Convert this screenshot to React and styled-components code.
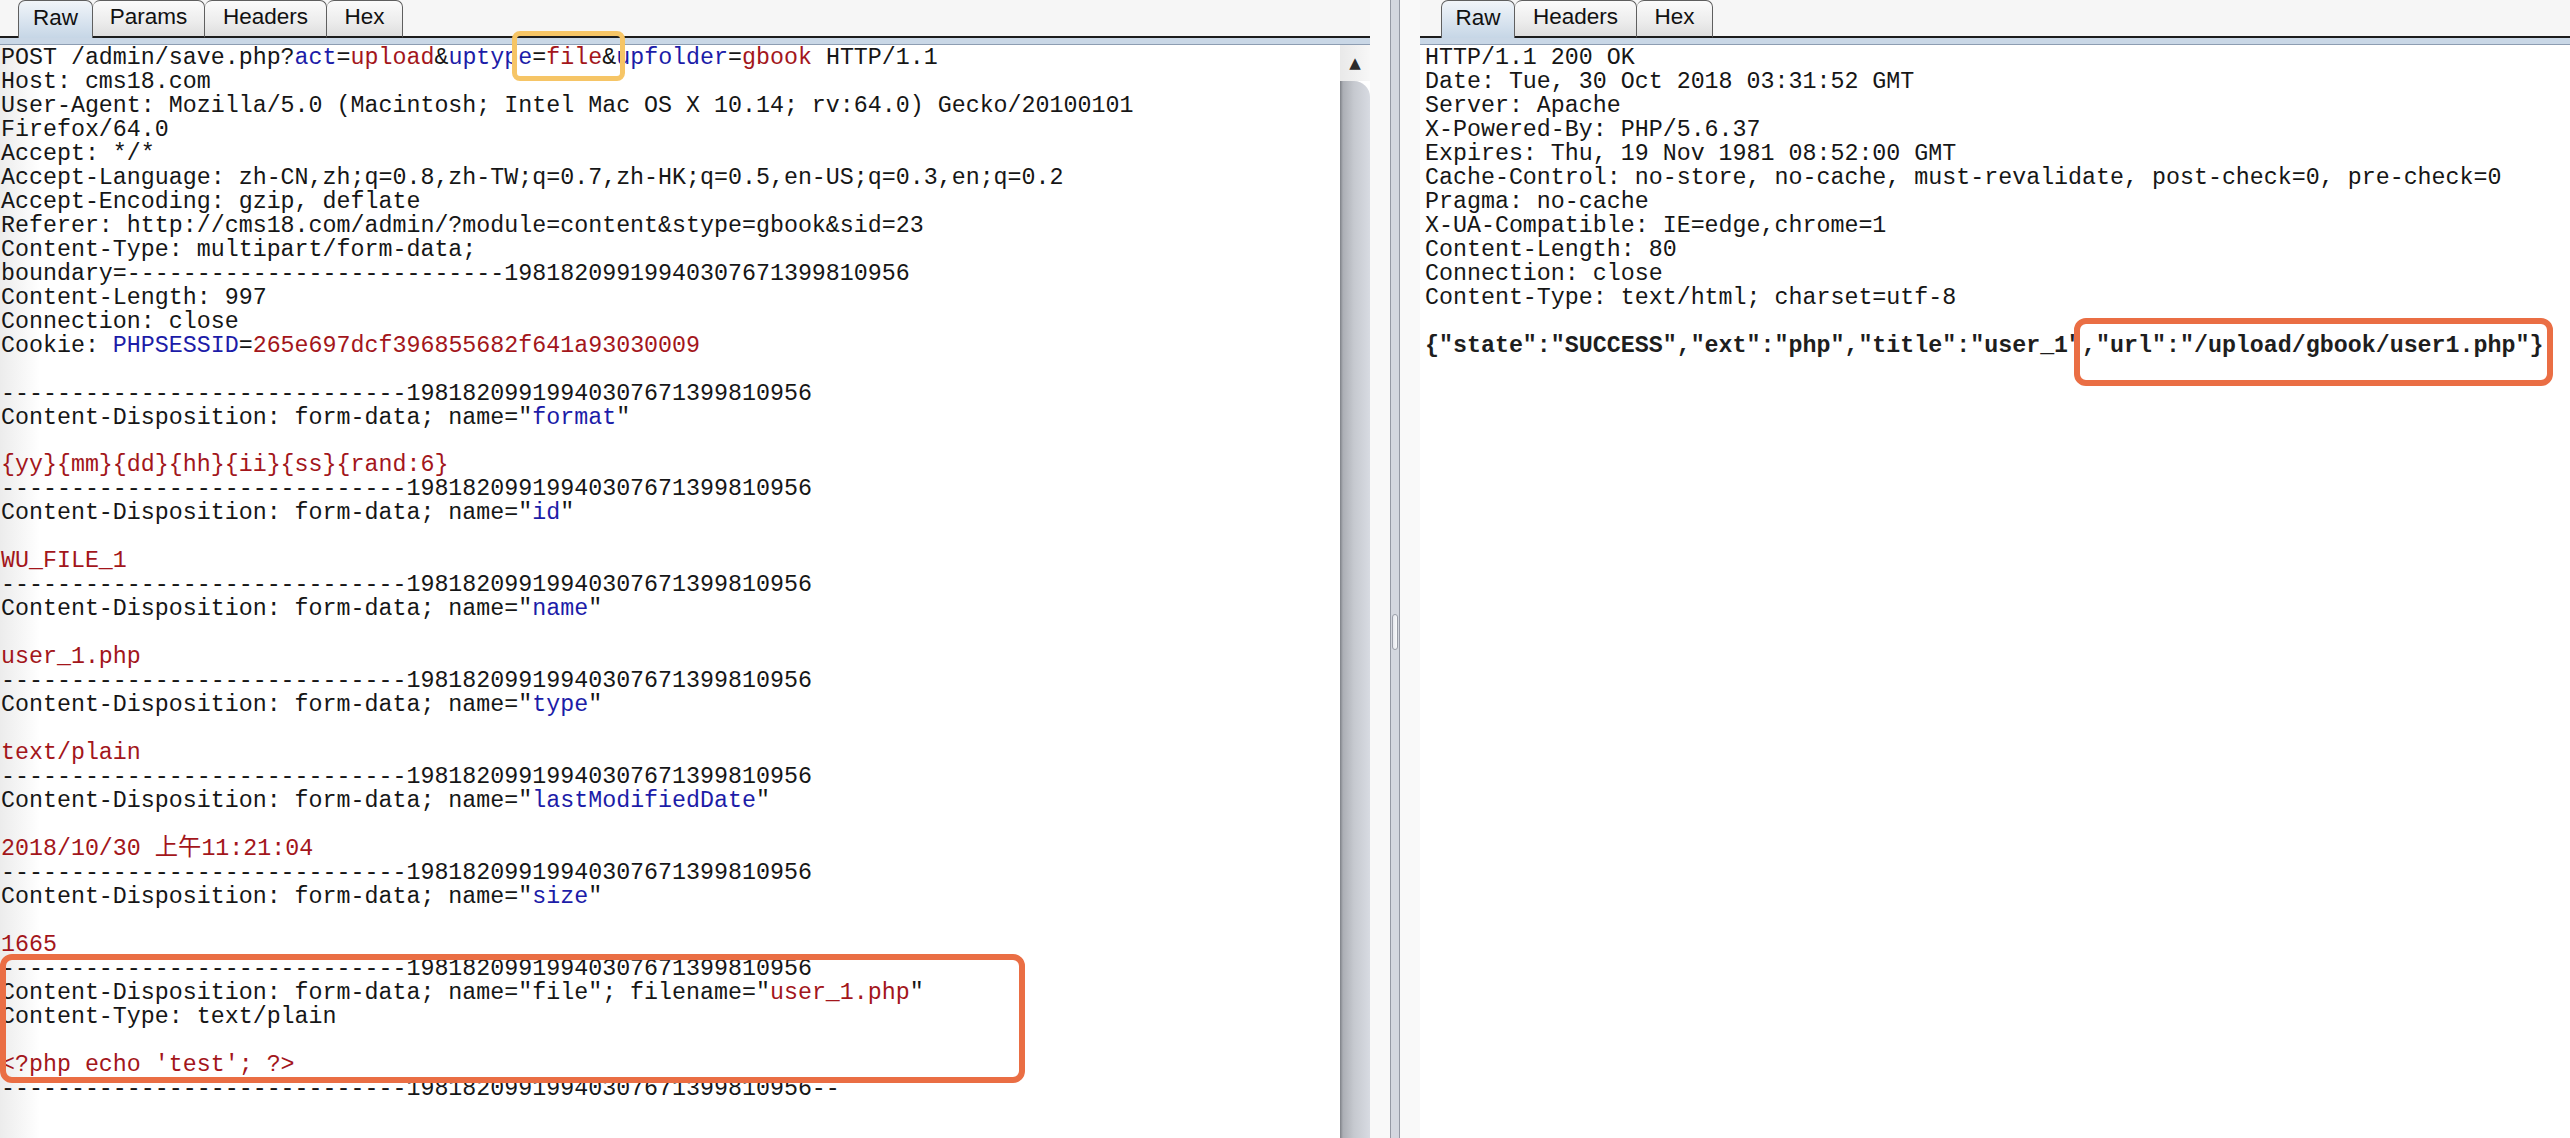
import React from "react";
import styled, { createGlobalStyle } from "styled-components";

const GlobalStyle = createGlobalStyle`
  html, body {
    margin: 0;
    padding: 0;
    background: #fafafa;
  }
`;

const Page = styled.div`
  width: 2570px;
  height: 1138px;
  display: flex;
  overflow: hidden;
  background: #fafafa;
`;

const Pane = styled.div`
  position: relative;
  display: flex;
  flex-direction: column;
  width: ${(p) => p.width || "auto"};
  flex: ${(p) => (p.width ? "0 0 auto" : "1 1 auto")};
  height: 100%;
`;

const TabBar = styled.div`
  height: 36px;
  display: flex;
  align-items: flex-end;
  padding-left: ${(p) => p.inset}px;
  background: #f6f6f6;
  border-bottom: 2px solid #1c1c1c;
`;

const Tab = styled.div`
  height: 38px;
  margin-bottom: -2px;
  width: ${(p) => p.w}px;
  box-sizing: border-box;
  display: flex;
  align-items: center;
  justify-content: center;
  font-family: "Liberation Sans", Arial, sans-serif;
  font-size: 22.5px;
  color: #111;
  border: 1px solid #5f5f5f;
  border-bottom: ${(p) => (p.active ? "none" : "2px solid #1c1c1c")};
  border-left: ${(p) => (p.first ? "1px solid #5f5f5f" : "none")};
  border-radius: 7px 7px 0 0;
  padding-bottom: 4px;
  background: ${(p) =>
    p.active
      ? "linear-gradient(#f1f5f9, #d9e4ef 55%, #c6d6e6)"
      : "linear-gradient(#fbfbfb, #ececec 60%, #dedede)"};
`;

const Band = styled.div`
  height: 6px;
  background: #c9d7e6;
  border-bottom: 1px solid #8d9db2;
`;

const Body = styled.div`
  flex: 1;
  display: flex;
  min-height: 0;
`;

const Editor = styled.div`
  position: relative;
  flex: 1;
  padding: 2px 0 0 ${(p) => p.pad}px;
  background: ${(p) =>
    p.shade ? "linear-gradient(90deg, #ececec, #ffffff 40px)" : "#ffffff"};
  font-family: "Liberation Mono", "Noto Sans CJK SC", monospace;
  font-size: 23.3px;
  line-height: 23.97px;
  color: #161616;
  white-space: pre;
`;

const Line = styled.div`
  height: 23.97px;
  font-weight: ${(p) => (p.bold ? 700 : 400)};
  color: ${(p) => (p.bold ? "#1e1e1e" : "inherit")};
`;

const Key = styled.span`
  color: #1c1ca8;
`;

const Val = styled.span`
  color: #a3161b;
`;

const Scrollbar = styled.div`
  width: 30px;
  display: flex;
  flex-direction: column;
  background: #ffffff;
`;

const ArrowButton = styled.div`
  height: 36px;
  display: flex;
  align-items: center;
  justify-content: center;
  background: linear-gradient(90deg, #e9e9e9, #f7f7f7);
  color: #2b2b2b;
  font-size: 15px;
  font-family: "DejaVu Sans", sans-serif;
`;

const Track = styled.div`
  flex: 1;
  border-top-right-radius: 16px;
  background: linear-gradient(90deg, #7e8187 0px, #acafb5 3px, #c6c9cf 14px, #d8dbe2 30px);
`;

const Gutter = styled.div`
  width: 50px;
  display: flex;
  padding-left: 20px;
  box-sizing: border-box;
  background: #f9f9f9;
`;

const SplitBar = styled.div`
  width: 10px;
  box-sizing: border-box;
  background: #d4d7df;
  border-left: 1px solid #9599a4;
  border-right: 1px solid #9599a4;
  display: flex;
  flex-direction: column;
  align-items: center;
  padding-top: 614px;
`;

const Grip = styled.div`
  width: 6px;
  height: 36px;
  box-sizing: border-box;
  border: 1px solid #9a9ea8;
  border-radius: 4px;
  background: linear-gradient(90deg, #e6e8ee, #f7f8fa);
`;

const Mark = styled.div`
  position: absolute;
  left: ${(p) => p.x}px;
  top: ${(p) => p.y}px;
  width: ${(p) => p.w}px;
  height: ${(p) => p.h}px;
  box-sizing: border-box;
  border: ${(p) => p.stroke}px solid ${(p) => p.color};
  border-radius: ${(p) => p.r}px;
  pointer-events: none;
`;

const B = "-----------------------------19818209919940307671399810956";

const cd = (name) => [
  'Content-Disposition: form-data; name="',
  <Key key="k">{name}</Key>,
  '"',
];

const requestLines = [
  [
    "POST /admin/save.php?",
    <Key key="1">act</Key>,
    "=",
    <Val key="2">upload</Val>,
    "&",
    <Key key="3">uptype</Key>,
    "=",
    <Val key="4">file</Val>,
    "&",
    <Key key="5">upfolder</Key>,
    "=",
    <Val key="6">gbook</Val>,
    " HTTP/1.1",
  ],
  ["Host: cms18.com"],
  ["User-Agent: Mozilla/5.0 (Macintosh; Intel Mac OS X 10.14; rv:64.0) Gecko/20100101"],
  ["Firefox/64.0"],
  ["Accept: */*"],
  ["Accept-Language: zh-CN,zh;q=0.8,zh-TW;q=0.7,zh-HK;q=0.5,en-US;q=0.3,en;q=0.2"],
  ["Accept-Encoding: gzip, deflate"],
  ["Referer: http://cms18.com/admin/?module=content&stype=gbook&sid=23"],
  ["Content-Type: multipart/form-data;"],
  ["boundary=---------------------------19818209919940307671399810956"],
  ["Content-Length: 997"],
  ["Connection: close"],
  ["Cookie: ", <Key key="1">PHPSESSID</Key>, "=", <Val key="2">265e697dcf396855682f641a93030009</Val>],
  [""],
  [B],
  cd("format"),
  [""],
  [<Val key="v">{"{yy}{mm}{dd}{hh}{ii}{ss}{rand:6}"}</Val>],
  [B],
  cd("id"),
  [""],
  [<Val key="v">WU_FILE_1</Val>],
  [B],
  cd("name"),
  [""],
  [<Val key="v">user_1.php</Val>],
  [B],
  cd("type"),
  [""],
  [<Val key="v">text/plain</Val>],
  [B],
  cd("lastModifiedDate"),
  [""],
  [<Val key="v">2018/10/30 上午11:21:04</Val>],
  [B],
  cd("size"),
  [""],
  [<Val key="v">1665</Val>],
  [B],
  ['Content-Disposition: form-data; name="file"; filename="', <Val key="v">user_1.php</Val>, '"'],
  ["Content-Type: text/plain"],
  [""],
  [<Val key="v">{"<?php echo 'test'; ?>"}</Val>],
  [B + "--"],
];

const responseLines = [
  "HTTP/1.1 200 OK",
  "Date: Tue, 30 Oct 2018 03:31:52 GMT",
  "Server: Apache",
  "X-Powered-By: PHP/5.6.37",
  "Expires: Thu, 19 Nov 1981 08:52:00 GMT",
  "Cache-Control: no-store, no-cache, must-revalidate, post-check=0, pre-check=0",
  "Pragma: no-cache",
  "X-UA-Compatible: IE=edge,chrome=1",
  "Content-Length: 80",
  "Connection: close",
  "Content-Type: text/html; charset=utf-8",
  "",
];

const json =
  '{"state":"SUCCESS","ext":"php","title":"user_1","url":"/upload/gbook/user1.php"}';

function Tabs({ names, inset }) {
  return (
    <TabBar inset={inset}>
      {names.map(([name, w], i) => (
        <Tab key={name} w={w} active={i === 0} first={i === 0}>
          {name}
        </Tab>
      ))}
    </TabBar>
  );
}

export default function App() {
  return (
    <>
      <GlobalStyle />
      <Page>
        <Pane width="1370px">
          <Tabs
            inset={18}
            names={[
              ["Raw", 75],
              ["Params", 112],
              ["Headers", 122],
              ["Hex", 76],
            ]}
          />
          <Band />
          <Body>
            <Editor pad={1} shade>
              {requestLines.map((segs, i) => (
                <Line key={i}>{segs}</Line>
              ))}
              <Mark x={0} y={909} w={1025} h={129} stroke={6} r={12} color="#ea6e44" />
            </Editor>
            <Scrollbar>
              <ArrowButton>▲</ArrowButton>
              <Track />
            </Scrollbar>
          </Body>
          <Mark x={512} y={31} w={113} h={50} stroke={5} r={8} color="#f6c566" />
        </Pane>

        <Gutter>
          <SplitBar>
            <Grip />
          </SplitBar>
        </Gutter>

        <Pane>
          <Tabs
            inset={21}
            names={[
              ["Raw", 74],
              ["Headers", 122],
              ["Hex", 76],
            ]}
          />
          <Band />
          <Body>
            <Editor pad={5}>
              {responseLines.map((l, i) => (
                <Line key={i}>{l}</Line>
              ))}
              <Line bold>{json}</Line>
              <Mark x={654} y={273} w={479} h={68} stroke={6} r={12} color="#ea6e44" />
            </Editor>
          </Body>
        </Pane>
      </Page>
    </>
  );
}
